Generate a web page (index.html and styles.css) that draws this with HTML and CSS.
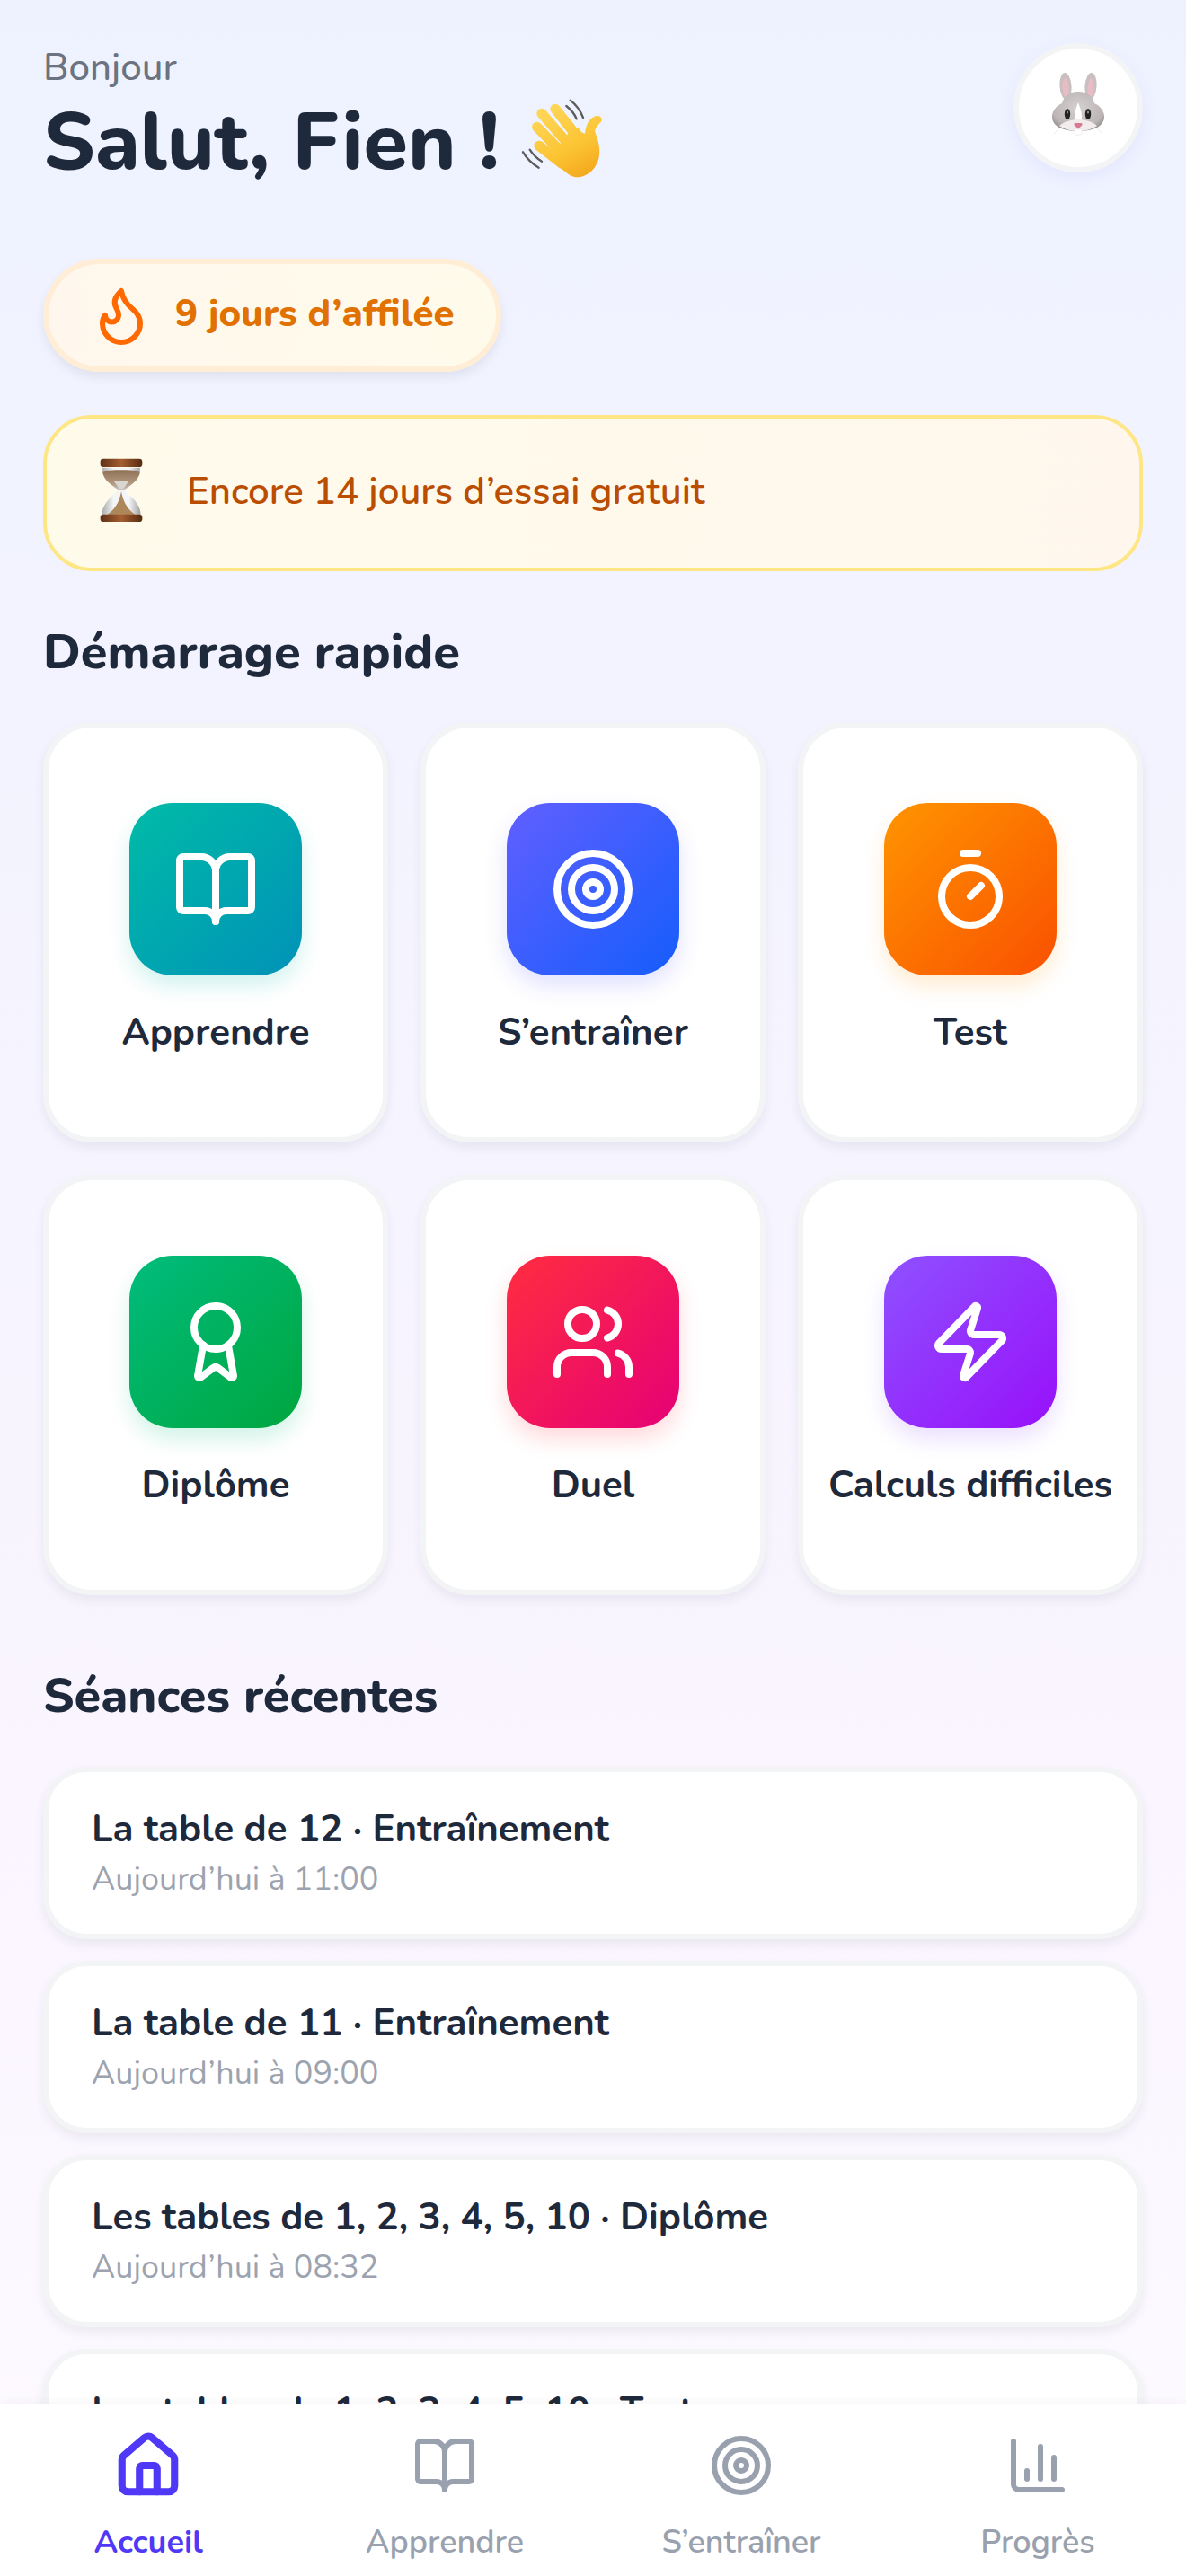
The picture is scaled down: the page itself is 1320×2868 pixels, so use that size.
FILE: index.html
```html
<!DOCTYPE html>
<html lang="fr">
<head>
<meta charset="utf-8">
<title>Accueil</title>
<link rel="stylesheet" href="styles.css">
</head>
<body>
<svg class="defs" width="0" height="0" aria-hidden="true">
  <symbol id="i-book" viewBox="0 0 24 24"><path d="M12 7v14"/><path d="M3 18a1 1 0 0 1-1-1V4a1 1 0 0 1 1-1h5a4 4 0 0 1 4 4 4 4 0 0 1 4-4h5a1 1 0 0 1 1 1v13a1 1 0 0 1-1 1h-6a3 3 0 0 0-3 3 3 3 0 0 0-3-3z"/></symbol>
  <symbol id="i-target" viewBox="0 0 24 24"><circle cx="12" cy="12" r="10"/><circle cx="12" cy="12" r="6"/><circle cx="12" cy="12" r="2"/></symbol>
  <symbol id="i-timer" viewBox="0 0 24 24"><line x1="10" x2="14" y1="2" y2="2"/><line x1="12" x2="15" y1="14" y2="11"/><circle cx="12" cy="14" r="8"/></symbol>
  <symbol id="i-award" viewBox="0 0 24 24"><path d="m15.477 12.89 1.515 8.526a.5.5 0 0 1-.81.47l-3.58-2.687a1 1 0 0 0-1.197 0l-3.586 2.686a.5.5 0 0 1-.81-.469l1.514-8.526"/><circle cx="12" cy="8" r="6"/></symbol>
  <symbol id="i-users" viewBox="0 0 24 24"><path d="M16 21v-2a4 4 0 0 0-4-4H6a4 4 0 0 0-4 4v2"/><circle cx="9" cy="7" r="4"/><path d="M22 21v-2a4 4 0 0 0-3-3.87"/><path d="M16 3.13a4 4 0 0 1 0 7.75"/></symbol>
  <symbol id="i-zap" viewBox="0 0 24 24"><path d="M4 14a1 1 0 0 1-.78-1.63l9.9-10.2a.5.5 0 0 1 .86.46l-1.92 6.02A1 1 0 0 0 13 10h7a1 1 0 0 1 .78 1.63l-9.9 10.2a.5.5 0 0 1-.86-.46l1.92-6.02A1 1 0 0 0 11 14z"/></symbol>
  <symbol id="i-home" viewBox="0 0 24 24"><path d="M15 21v-8a1 1 0 0 0-1-1h-4a1 1 0 0 0-1 1v8"/><path d="M3 10a2 2 0 0 1 .709-1.528l7-5.999a2 2 0 0 1 2.582 0l7 5.999A2 2 0 0 1 21 10v9a2 2 0 0 1-2 2H5a2 2 0 0 1-2-2z"/></symbol>
  <symbol id="i-chart" viewBox="0 0 24 24"><path d="M3 3v16a2 2 0 0 0 2 2h16"/><path d="M18 17V9"/><path d="M13 17V5"/><path d="M8 17v-3"/></symbol>
  <symbol id="i-flame" viewBox="0 0 24 24"><path d="M8.5 14.5A2.5 2.5 0 0 0 11 12c0-1.38-.5-2-1-3-1.072-2.143-.224-4.054 2-6 .5 2.5 2 4.9 4 6.5 2 1.6 3 3.5 3 5.5a7 7 0 1 1-14 0c0-1.153.433-2.294 1-3a2.5 2.5 0 0 0 2.5 2.5z"/></symbol>
</svg>
<div class="screen">
  <main class="content">
    <header class="top">
      <div class="greet">
        <p class="hello">Bonjour</p>
        <h1 class="title"><span>Salut, Fien !</span>
          <svg class="wave" viewBox="0 0 360 360" aria-hidden="true">
            <defs><linearGradient id="hand" gradientUnits="userSpaceOnUse" x1="140" y1="70" x2="280" y2="330"><stop offset="0" stop-color="#ffd95c"/><stop offset="0.6" stop-color="#fcc433"/><stop offset="1" stop-color="#f3a51a"/></linearGradient></defs>
            <g fill="none" stroke="url(#hand)" stroke-width="34" stroke-linecap="round">
              <path d="M174 94 244 182"/>
              <path d="M129 109 218 212"/>
              <path d="M113 154 196 240"/>
              <path d="M120 217 196 276"/>
            </g>
            <path d="M150 250 195 205 225 165 250 155 262 172 273 176C276 150 285 128 303 120 316 113 331 120 329 131 327 141 310 148 306 168 316 195 326 225 320 255 312 295 280 322 245 322 225 322 205 305 150 250Z" fill="url(#hand)"/>
            <path d="M211 84C226 96 238 110 245 127M224 65C244 80 258 100 267 123M89 230C100 247 113 260 129 269M66 238C78 258 97 277 119 290" fill="none" stroke="#5c5c5c" stroke-width="7" stroke-linecap="round"/>
          </svg>
        </h1>
      </div>
      <div class="avatar">
        <svg class="bunny" viewBox="0 0 60 70" aria-hidden="true">
          <defs><radialGradient id="fur" cx="0.5" cy="0.42" r="0.62"><stop offset="0" stop-color="#d6d0d0"/><stop offset="0.78" stop-color="#bdb6b7"/><stop offset="1" stop-color="#948e90"/></radialGradient></defs>
          <ellipse cx="16" cy="15" rx="6.5" ry="15" fill="#c7bfc0" transform="rotate(-4 16 15)"/>
          <ellipse cx="44" cy="15" rx="6.5" ry="15" fill="#c7bfc0" transform="rotate(4 44 15)"/>
          <ellipse cx="16" cy="17" rx="3.6" ry="11" fill="#e8bcc4" transform="rotate(-4 16 17)"/>
          <ellipse cx="44" cy="17" rx="3.6" ry="11" fill="#e8bcc4" transform="rotate(4 44 17)"/>
          <path d="M30 21c11 0 16 6 18 13 7 3 11 9 11 15 0 9-9 16-29 16S1 58 1 49c0-6 4-12 11-15 2-7 7-13 18-13z" fill="url(#fur)"/>
          <path d="M30 33c-2 6-4 10-4 15 0 5 1 7 4 7s4-2 4-7c0-5-2-9-4-15z" fill="#fff"/>
          <path d="M9 59c6-5 14-7 21-7s15 2 21 7c-6 4-13 6-21 6s-15-2-21-6z" fill="#f2ecec"/>
          <ellipse cx="18" cy="46" rx="3.2" ry="6" fill="#222"/><ellipse cx="41" cy="46" rx="3.2" ry="6" fill="#222"/>
          <ellipse cx="18" cy="44" rx="1" ry="1.6" fill="#999"/><ellipse cx="41" cy="44" rx="1" ry="1.6" fill="#999"/>
          <path d="M25.5 56h8c1.2 0 1.4 2 .3 3l-3.800 3.500-3.800-3.500c-1.100-1-1-3 .3-3z" fill="#d87a92"/>
          <rect x="26" y="63" width="8" height="6" rx="1" fill="#fff" stroke="#ddd" stroke-width=".5"/>
          <path d="M3 68l6-6M57 68l-6-6" stroke="#ddd" stroke-width=".6" fill="none"/>
        </svg>
      </div>
    </header>

    <div class="streak">
      <svg class="ic streak-ic"><use href="#i-flame"/></svg>
      <span class="banner-text">9 jours d’affilée</span>
    </div>

    <div class="trial">
      <svg class="glass" viewBox="60 57 156 225" aria-hidden="true">
        <defs>
          <linearGradient id="wood" x1="0" y1="0" x2="1" y2="0"><stop offset="0" stop-color="#5e2f14"/><stop offset="0.5" stop-color="#a45f32"/><stop offset="1" stop-color="#572a10"/></linearGradient>
          <linearGradient id="glassfill" x1="0" y1="0" x2="1" y2="0"><stop offset="0" stop-color="#a9a9a9"/><stop offset="0.3" stop-color="#f2f4f6"/><stop offset="0.7" stop-color="#f4f5f7"/><stop offset="1" stop-color="#9f9f9f"/></linearGradient>
          <linearGradient id="sand" x1="0" y1="0" x2="0" y2="1"><stop offset="0" stop-color="#8d7055"/><stop offset="0.7" stop-color="#b39a80"/><stop offset="1" stop-color="#c9c4be"/></linearGradient>
        </defs>
        <path d="M72 92H198C198 130 170 150 145 168 170 190 200 215 200 250H70C70 215 100 190 125 168 100 150 72 130 72 92Z" fill="url(#glassfill)"/>
        <path d="M72 104C90 98 180 98 198 104 195 135 165 150 145 166H125C105 150 75 135 72 104Z" fill="url(#sand)"/>
        <path d="M110 137H160L142 162H128Z" fill="#d9d6d2"/>
        <path d="M88 250C110 232 127 215 135 172 143 215 160 232 182 250Z" fill="#ad875a"/>
        <rect x="65" y="62" width="140" height="28" rx="10" fill="url(#wood)"/>
        <rect x="65" y="248" width="140" height="25" rx="10" fill="url(#wood)"/>
      </svg>
      <span class="banner-text">Encore 14 jours d’essai gratuit</span>
    </div>

    <h2 class="section first">Démarrage rapide</h2>
    <div class="grid">
      <a class="tile"><span class="tile-ic teal"><svg class="ic"><use href="#i-book"/></svg></span><span class="tile-label">Apprendre</span></a>
      <a class="tile"><span class="tile-ic blue"><svg class="ic"><use href="#i-target"/></svg></span><span class="tile-label">S’entraîner</span></a>
      <a class="tile"><span class="tile-ic orange"><svg class="ic"><use href="#i-timer"/></svg></span><span class="tile-label">Test</span></a>
      <a class="tile"><span class="tile-ic green"><svg class="ic"><use href="#i-award"/></svg></span><span class="tile-label">Diplôme</span></a>
      <a class="tile"><span class="tile-ic red"><svg class="ic"><use href="#i-users"/></svg></span><span class="tile-label">Duel</span></a>
      <a class="tile"><span class="tile-ic purple"><svg class="ic"><use href="#i-zap"/></svg></span><span class="tile-label">Calculs difficiles</span></a>
    </div>

    <h2 class="section recent">Séances récentes</h2>
    <ul class="list">
      <li class="row"><p class="row-t">La table de 12 · Entraînement</p><p class="row-s">Aujourd’hui à 11:00</p></li>
      <li class="row"><p class="row-t">La table de 11 · Entraînement</p><p class="row-s">Aujourd’hui à 09:00</p></li>
      <li class="row"><p class="row-t">Les tables de 1, 2, 3, 4, 5, 10 · Diplôme</p><p class="row-s">Aujourd’hui à 08:32</p></li>
      <li class="row"><p class="row-t">Les tables de 1, 2, 3, 4, 5, 10 · Test</p><p class="row-s">Aujourd’hui à 08:10</p></li>
    </ul>
  </main>
  <nav class="nav">
    <a class="nav-item active"><svg class="ic nav-home"><use href="#i-home"/></svg><span>Accueil</span></a>
    <a class="nav-item"><svg class="ic"><use href="#i-book"/></svg><span>Apprendre</span></a>
    <a class="nav-item"><svg class="ic"><use href="#i-target"/></svg><span>S’entraîner</span></a>
    <a class="nav-item"><svg class="ic"><use href="#i-chart"/></svg><span>Progrès</span></a>
  </nav>
</div>
</body>
</html>
```
FILE: styles.css
```css
* { box-sizing: border-box; }
html, body { margin: 0; padding: 0; }
body {
  width: 1320px;
  height: 2868px;
  overflow: hidden;
  font-family: "Nunito", "Lato", "Liberation Sans", sans-serif;
  color: #1e293b;
}
p, h1, h2, ul { margin: 0; padding: 0; }
.defs { position: absolute; }
.screen {
  position: relative;
  width: 1320px;
  height: 2868px;
  overflow: hidden;
  background: linear-gradient(180deg, #eef2ff 0%, #faf5ff 70%, #fdfaff 100%);
}
.content { padding: 48px 48px 0; }
.ic {
  width: 96px;
  height: 96px;
  fill: none;
  stroke: currentColor;
  stroke-width: 2;
  stroke-linecap: round;
  stroke-linejoin: round;
}
.top { display: flex; justify-content: space-between; align-items: flex-start; }
.greet { padding-top: 5px; }
.hello { font-size: 42px; line-height: 46px; color: #6b7280; font-weight: 500; }
.title {
  display: flex;
  align-items: center;
  gap: 4px;
  height: 100px;
  font-size: 90px;
  line-height: 100px;
  font-weight: 800;
  margin-top: 10px;
}
.wave { width: 120px; height: 120px; margin-bottom: 18px; }
.avatar {
  width: 144px;
  height: 144px;
  border-radius: 50%;
  background: #fff;
  border: 6px solid #f3f4f6;
  box-shadow: 0 6px 18px rgba(99, 102, 241, .08);
  display: flex;
  align-items: center;
  justify-content: center;
}
.bunny { width: 60px; height: 70px; margin-bottom: 8px; }
.banner-text { padding-bottom: 4px; }
.streak {
  display: inline-flex;
  align-items: center;
  gap: 24px;
  height: 126px;
  margin-top: 79px;
  padding: 0 46px 0 45px;
  border-radius: 63px;
  border: 6px solid #ffedd5;
  background: linear-gradient(90deg, #fff7ed, #fffbeb);
  box-shadow: 0 6px 12px rgba(0, 0, 0, .07);
  color: #e17100;
  font-size: 42px;
  font-weight: 800;
}
.streak-ic { width: 72px; height: 72px; color: #ff6900; }
.trial {
  display: flex;
  align-items: center;
  gap: 46px;
  height: 174px;
  margin-top: 48px;
  padding: 0 58px;
  border-radius: 54px;
  border: 4px solid #fee685;
  background: linear-gradient(90deg, #fffbeb, #fff7ed);
  color: #bb4d00;
  font-size: 42px;
  font-weight: 600;
}
.glass { width: 52px; height: 75px; margin-bottom: 6px; }
.section { font-size: 54px; line-height: 66px; font-weight: 800; }
.first { margin-top: 57px; }
.recent { margin-top: 79px; }
.grid {
  display: grid;
  grid-template-columns: repeat(3, 1fr);
  gap: 36px;
  margin-top: 45px;
}
.tile {
  height: 468px;
  display: flex;
  flex-direction: column;
  align-items: center;
  padding-top: 84px;
  border-radius: 54px;
  background: #fff;
  border: 6px solid #f3f4f6;
  box-shadow: 0 6px 12px rgba(30, 41, 59, .07);
}
.tile-ic {
  width: 192px;
  height: 192px;
  border-radius: 48px;
  display: flex;
  align-items: center;
  justify-content: center;
  color: #fff;
}
.teal { background: linear-gradient(135deg, #00bba7, #0092b8); box-shadow: 0 12px 24px rgba(0, 187, 167, .18); }
.blue { background: linear-gradient(135deg, #615fff, #155dfc); box-shadow: 0 12px 24px rgba(97, 95, 255, .18); }
.orange { background: linear-gradient(135deg, #ff9500, #f95000); box-shadow: 0 12px 24px rgba(255, 149, 0, .18); }
.green { background: linear-gradient(135deg, #00bc7d, #00a63e); box-shadow: 0 12px 24px rgba(0, 188, 125, .18); }
.red { background: linear-gradient(135deg, #ff2d3f, #e60076); box-shadow: 0 12px 24px rgba(255, 45, 63, .18); }
.purple { background: linear-gradient(135deg, #8e51ff, #9810fa); box-shadow: 0 12px 24px rgba(142, 81, 255, .18); }
.tile-label { margin-top: 37px; font-size: 42px; line-height: 54px; font-weight: 700; white-space: nowrap; }
.list { list-style: none; margin-top: 46px; display: flex; flex-direction: column; gap: 24px; }
.row {
  height: 192px;
  padding: 0 48px;
  display: flex;
  flex-direction: column;
  justify-content: center;
  gap: 6px;
  background: #fff;
  border: 6px solid #f3f4f6;
  border-radius: 48px;
  box-shadow: 0 6px 12px rgba(30, 41, 59, .07);
}
.row-t { font-size: 42px; line-height: 54px; font-weight: 700; }
.row-s { font-size: 36px; line-height: 46px; color: #9ca3af; }
.nav {
  position: absolute;
  left: 0;
  right: 0;
  bottom: 0;
  height: 192px;
  display: grid;
  grid-template-columns: repeat(4, 1fr);
  background: #fff;
  box-shadow: 0 -3px 9px rgba(30, 41, 59, .03);
  color: #99a1af;
}
.nav-item { display: flex; flex-direction: column; align-items: center; padding-top: 33px; }
.nav-item .ic { width: 72px; height: 72px; }
.nav-item span { margin-top: 26px; font-size: 36px; line-height: 48px; font-weight: 600; }
.active { color: #4f39f6; }
.nav-item.active { padding-top: 30px; }
.nav-item .nav-home { width: 78px; height: 78px; stroke-width: 2.5; }
.active span { margin-top: 23px; font-weight: 700; }
```
